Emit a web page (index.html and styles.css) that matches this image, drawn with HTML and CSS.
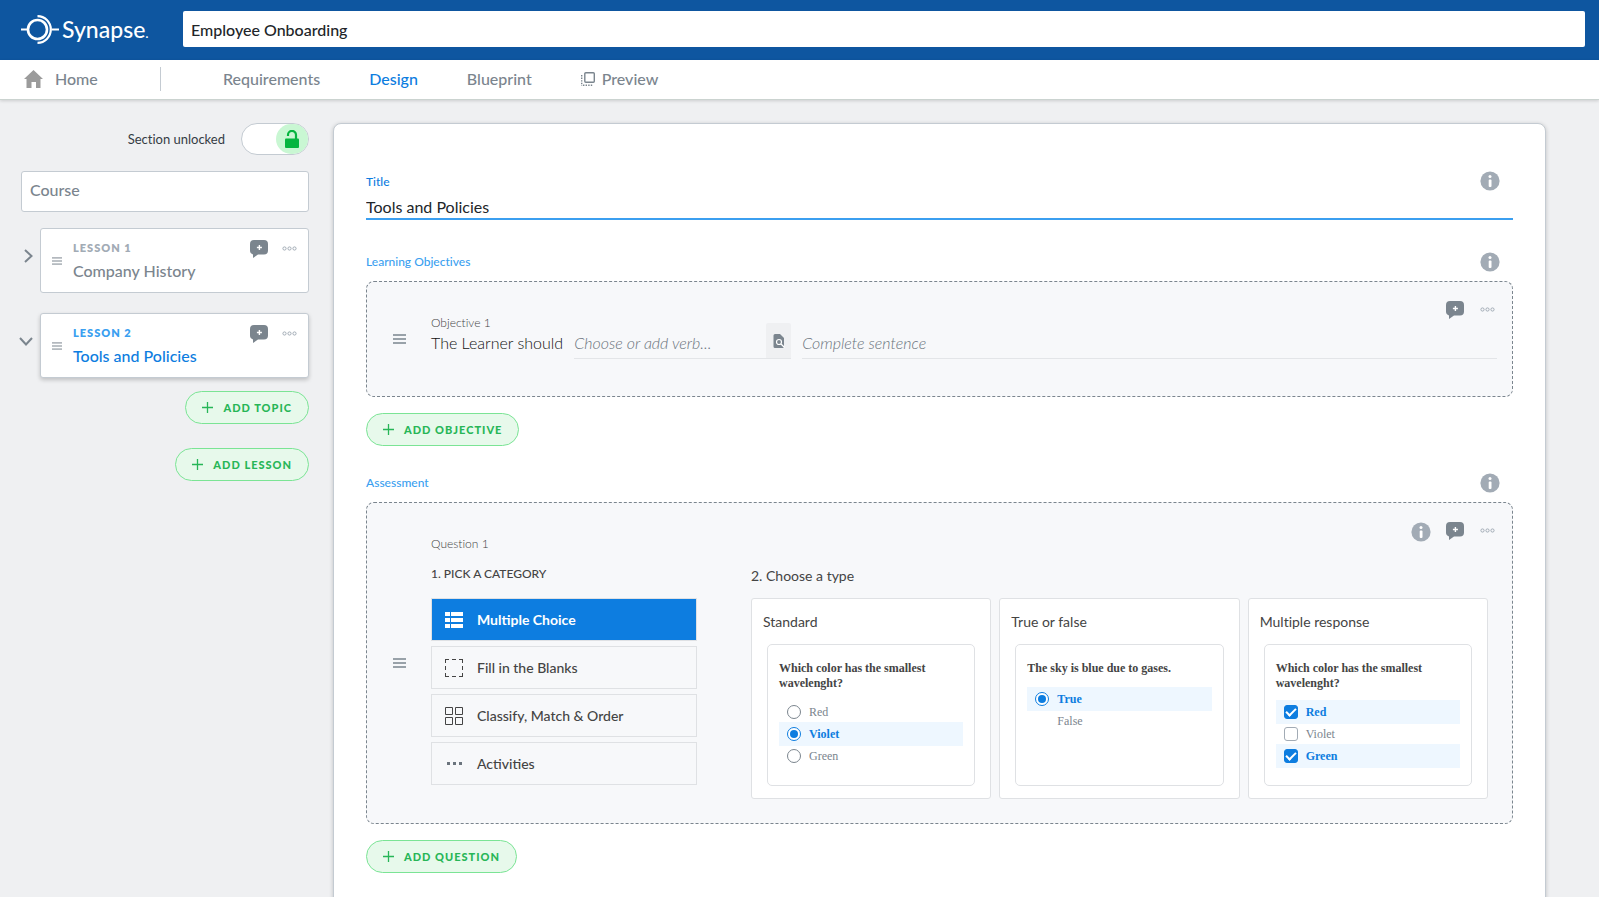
FILE: index.html
```
<!DOCTYPE html>
<html lang="en">
<head>
    <meta charset="UTF-8">
    <meta name="viewport" content="width=device-width, initial-scale=1.0">
    <title>Synapse - Employee Onboarding</title>
    <link rel="stylesheet" href="styles.css">
</head>
<body>
    <!-- Shared icons -->
    <svg class="sprite" aria-hidden="true">
        <symbol id="icon-info" viewBox="0 0 20 20">
            <circle cx="10" cy="10" r="9.6" fill="#a2abb5"/>
            <circle cx="10" cy="5.4" r="1.5" fill="#fff"/>
            <rect x="8.7" y="8.4" width="2.8" height="7.6" rx="1" fill="#fff"/>
        </symbol>
        <symbol id="icon-comment" viewBox="0 0 18 18">
            <path d="M4 0h10a4 4 0 0 1 4 4v6.5a4 4 0 0 1-4 4H8L3 18v-3.6A4 4 0 0 1 0 10.500V4a4 4 0 0 1 4-4z" fill="#7b858e"/>
            <path d="M9.400 5v5M6.900 7.500h5" stroke="#fff" stroke-width="1.400"/>
        </symbol>
        <symbol id="icon-more" viewBox="0 0 15 5">
            <g fill="none" stroke="#a2abb5">
                <circle cx="2.500" cy="2.500" r="1.600"/>
                <circle cx="7.500" cy="2.500" r="1.600"/>
                <circle cx="12.500" cy="2.500" r="1.600"/>
            </g>
        </symbol>
        <symbol id="icon-plus" viewBox="0 0 11 11">
            <path d="M5.500 0v11M0 5.500h11" stroke="#27b657" stroke-width="1.300"/>
        </symbol>
        <symbol id="icon-drag" viewBox="0 0 13 10">
            <path d="M0 1h13M0 5h13M0 9h13" stroke="#7b858e" stroke-width="1.300"/>
        </symbol>
    </svg>

    <header class="header">
        <a class="logo" href="#" aria-label="Synapse">
            <svg class="logo-mark" viewBox="0 0 38 30">
                <g fill="none" stroke="#fff">
                    <circle cx="16.500" cy="15.500" r="9.500" stroke-width="2.600"/>
                    <path d="M0 15.500h7M30.500 15.500H38" stroke-width="2.200"/>
                    <path d="M16.500 2.200a13.300 13.300 0 0 1 0 26.600" stroke-width="2.200"/>
                </g>
            </svg>
            <span class="logo-text">Synapse<small>.</small></span>
        </a>
        <input class="project-name" type="text" value="Employee Onboarding" aria-label="Project name">
    </header>

    <nav class="nav">
        <a class="nav-home" href="#">
            <svg width="19" height="18" viewBox="0 0 19 18"><path d="M9.500 0L19 9h-2.500v9h-4.500v-6H7.500v6H2.500V9H0z" fill="#9b9b9b"/></svg>
            Home
        </a>
        <div class="nav-links">
            <a href="#">Requirements</a>
            <a class="active" href="#">Design</a>
            <a href="#">Blueprint</a>
            <a class="nav-preview" href="#">
                <svg width="14" height="14" viewBox="0 0 14 14" fill="none" stroke="#7b858e">
                    <rect x="3.800" y=".7" width="9.500" height="9.500" rx="1" stroke-width="1.400"/>
                    <path d="M.7 3v11M2 13.300h10" stroke-width="1.400" stroke-dasharray="1.400 1.200"/>
                </svg>
                Preview
            </a>
        </div>
    </nav>

    <div class="layout">
        <aside class="sidebar">
            <label class="lock">
                Section unlocked
                <input type="checkbox" checked>
                <span class="lock-track">
                    <span class="lock-knob">
                        <svg width="14" height="18" viewBox="0 0 14 18">
                            <path d="M3 6V5a4 4 0 0 1 8-.2V9" fill="none" stroke="#05b53f" stroke-width="2.200"/>
                            <rect y="8.500" width="14" height="9.500" rx="1" fill="#05b53f"/>
                        </svg>
                    </span>
                </span>
            </label>

            <a class="course" href="#">Course</a>

            <div class="lesson-row">
                <button class="toggle" type="button" aria-label="Expand lesson 1">
                    <svg width="9" height="14" viewBox="0 0 9 14"><path d="M1 1l6.500 6L1 13" fill="none" stroke="#7b858e" stroke-width="2"/></svg>
                </button>
                <div class="lesson">
                    <svg class="lesson-drag"><use href="#icon-drag"/></svg>
                    <div class="lesson-text">
                        <span class="lesson-number">LESSON 1</span>
                        <a class="lesson-title" href="#">Company History</a>
                    </div>
                    <div class="actions">
                        <button type="button" aria-label="Add comment"><svg class="comment"><use href="#icon-comment"/></svg></button>
                        <button type="button" aria-label="More"><svg class="more"><use href="#icon-more"/></svg></button>
                    </div>
                </div>
            </div>

            <div class="lesson-row">
                <button class="toggle" type="button" aria-label="Collapse lesson 2">
                    <svg width="14" height="9" viewBox="0 0 14 9"><path d="M1 1l6 6.500L13 1" fill="none" stroke="#7b858e" stroke-width="2"/></svg>
                </button>
                <div class="lesson selected">
                    <svg class="lesson-drag"><use href="#icon-drag"/></svg>
                    <div class="lesson-text">
                        <span class="lesson-number">LESSON 2</span>
                        <a class="lesson-title" href="#">Tools and Policies</a>
                    </div>
                    <div class="actions">
                        <button type="button" aria-label="Add comment"><svg class="comment"><use href="#icon-comment"/></svg></button>
                        <button type="button" aria-label="More"><svg class="more"><use href="#icon-more"/></svg></button>
                    </div>
                </div>
            </div>

            <div class="sidebar-buttons">
                <button class="add" type="button"><svg><use href="#icon-plus"/></svg>ADD TOPIC</button>
                <button class="add" type="button"><svg><use href="#icon-plus"/></svg>ADD LESSON</button>
            </div>
        </aside>

        <main class="panel">
            <section class="field">
                <div class="section-head">
                    <label class="strong" for="title">Title</label>
                    <button type="button" aria-label="About the title"><svg class="info"><use href="#icon-info"/></svg></button>
                </div>
                <input class="title-input" type="text" id="title" value="Tools and Policies">
            </section>

            <section class="group">
                <div class="section-head">
                    <h2>Learning Objectives</h2>
                    <button type="button" aria-label="About learning objectives"><svg class="info"><use href="#icon-info"/></svg></button>
                </div>
                <div class="box">
                    <svg class="drag"><use href="#icon-drag"/></svg>
                    <div class="box-body">
                        <p class="item-name">Objective 1</p>
                        <div class="objective-line">
                            <label for="verb">The Learner should</label>
                            <div class="verb">
                                <input type="text" id="verb" placeholder="Choose or add verb...">
                                <button type="button" aria-label="Find a verb">
                                    <svg width="12" height="14" viewBox="0 0 12 14">
                                        <path d="M2 0h5l4 4v9a1 1 0 0 1-1 1H2a1.500 1.500 0 0 1-1.500-1.500v-11A1.500 1.500 0 0 1 2 0z" fill="#7b858e"/>
                                        <circle cx="6" cy="8" r="2.500" fill="none" stroke="#fff" stroke-width="1.200"/>
                                        <path d="M8 10l3.500 3.500" stroke="#fff" stroke-width="1.200"/>
                                    </svg>
                                </button>
                            </div>
                            <input class="sentence" type="text" placeholder="Complete sentence" aria-label="Complete sentence">
                        </div>
                    </div>
                    <div class="actions box-actions">
                        <button type="button" aria-label="Add comment"><svg class="comment"><use href="#icon-comment"/></svg></button>
                        <button type="button" aria-label="More"><svg class="more"><use href="#icon-more"/></svg></button>
                    </div>
                </div>
                <button class="add" type="button"><svg><use href="#icon-plus"/></svg>ADD OBJECTIVE</button>
            </section>

            <section class="group">
                <div class="section-head">
                    <h2>Assessment</h2>
                    <button type="button" aria-label="About assessment"><svg class="info"><use href="#icon-info"/></svg></button>
                </div>
                <div class="box">
                    <svg class="drag"><use href="#icon-drag"/></svg>
                    <div class="box-body question-body">
                        <p class="item-name">Question 1</p>
                        <div class="question">
                            <div class="categories">
                                <h3 class="small-heading">1. PICK A CATEGORY</h3>
                                <button class="category chosen" type="button">
                                    <svg viewBox="0 0 18 18" fill="#fff">
                                        <path d="M0 1h5v4H0zM6 1h12v4H6zM0 7h5v4H0zM6 7h12v4H6zM0 13h5v4H0zM6 13h12v4H6z"/>
                                    </svg>
                                    Multiple Choice
                                </button>
                                <button class="category" type="button">
                                    <svg viewBox="0 0 18 18" fill="none" stroke="#444">
                                        <path d="M0 .5h18M0 17.500h18M.5 0v18M17.500 0v18" stroke-dasharray="4 3"/>
                                    </svg>
                                    Fill in the Blanks
                                </button>
                                <button class="category" type="button">
                                    <svg viewBox="0 0 18 18" fill="none" stroke="#444">
                                        <path d="M.5.5h7v7h-7zM10.500.5h7v7h-7zM.5 10.500h7v7h-7zM10.500 10.500h7v7h-7z"/>
                                    </svg>
                                    Classify, Match &amp; Order
                                </button>
                                <button class="category" type="button">
                                    <svg viewBox="0 0 18 18" fill="#6b747d">
                                        <path d="M2 7h3v3H2zM8 7h3v3H8zM14 7h3v3h-3z"/>
                                    </svg>
                                    Activities
                                </button>
                            </div>

                            <div class="types">
                                <h3>2. Choose a type</h3>
                                <div class="type-list">
                                    <article class="type">
                                        <h4>Standard</h4>
                                        <div class="sample">
                                            <p>Which color has the smallest wavelenght?</p>
                                            <div class="options radios">
                                                <label><input type="radio" name="standard">Red</label>
                                                <label class="picked"><input type="radio" name="standard" checked>Violet</label>
                                                <label><input type="radio" name="standard">Green</label>
                                            </div>
                                        </div>
                                    </article>
                                    <article class="type">
                                        <h4>True or false</h4>
                                        <div class="sample">
                                            <p>The sky is blue due to gases.</p>
                                            <div class="options radios">
                                                <label class="picked"><input type="radio" name="truefalse" checked>True</label>
                                                <label><input class="blank" type="radio" name="truefalse">False</label>
                                            </div>
                                        </div>
                                    </article>
                                    <article class="type">
                                        <h4>Multiple response</h4>
                                        <div class="sample">
                                            <p>Which color has the smallest wavelenght?</p>
                                            <div class="options">
                                                <label class="picked"><input type="checkbox" checked>Red</label>
                                                <label><input type="checkbox">Violet</label>
                                                <label class="picked"><input type="checkbox" checked>Green</label>
                                            </div>
                                        </div>
                                    </article>
                                </div>
                            </div>
                        </div>
                    </div>
                    <div class="actions box-actions">
                        <button type="button" aria-label="About questions"><svg class="info"><use href="#icon-info"/></svg></button>
                        <button type="button" aria-label="Add comment"><svg class="comment"><use href="#icon-comment"/></svg></button>
                        <button type="button" aria-label="More"><svg class="more"><use href="#icon-more"/></svg></button>
                    </div>
                </div>
                <button class="add" type="button"><svg><use href="#icon-plus"/></svg>ADD QUESTION</button>
            </section>
        </main>
    </div>
</body>
</html>
```
FILE: styles.css
```
* {
    box-sizing: border-box;
}

body {
    margin: 0;
    background-color: #eff0f2;
    color: #444;
    font-family: Lato, sans-serif;
    font-size: 14px;
    font-variant-ligatures: none;
}

h2, h3, h4, p {
    margin: 0;
    font-weight: 500;
}

a {
    color: inherit;
    text-decoration: none;
}

button, input {
    font-family: inherit;
    margin: 0;
}

button {
    padding: 0;
    border: none;
    background: none;
    cursor: pointer;
}

svg {
    display: block;
    flex-shrink: 0;
}

.sprite {
    display: none;
}

/* Header */
.header {
    display: flex;
    align-items: center;
    height: 60px;
    padding: 0 14px 2px 21px;
    background-color: #0e56a0;
}

.logo {
    display: flex;
    align-items: center;
    gap: 3px;
    width: 162px;
    color: #fff;
}

.logo-mark {
    width: 38px;
    height: 30px;
}

.logo-text {
    padding-top: 3px;
    font-size: 23px;
    font-weight: 500;
    line-height: 30px;
}

.logo-text small {
    font-size: 14px;
}

.project-name {
    flex: 1;
    height: 36px;
    padding: 0 8px;
    border: none;
    border-radius: 2px;
    background-color: #fff;
    color: #212529;
    font-size: 16px;
    font-weight: 500;
}

.nav {
    display: flex;
    align-items: center;
    height: 40px;
    padding: 0 0 2px 24px;
    border-bottom: 1px solid #cbd3d0;
    background-color: #fff;
    box-shadow: 0 1px 3px rgba(0, 0, 0, 0.15);
    color: #7b858e;
    font-size: 16px;
    font-weight: 500;
}

.nav-home {
    display: flex;
    align-items: center;
    gap: 12px;
    width: 137px;
    height: 24px;
    border-right: 1px solid #c4cbd2;
}

.nav-links {
    display: flex;
    gap: 49px;
    padding-left: 62px;
}

.nav-links .active {
    color: #0d7de0;
}

.nav-preview {
    display: flex;
    align-items: center;
    gap: 7px;
}

/* Layout */
.layout {
    display: flex;
    align-items: flex-start;
    gap: 24px;
    padding: 23px 53px 0 19px;
}

.sidebar {
    width: 290px;
    flex-shrink: 0;
}

.lock {
    display: flex;
    align-items: center;
    justify-content: flex-end;
    gap: 16px;
    color: #353c44;
    font-size: 13px;
    font-weight: 400;
    position: relative;
}

.lock input {
    position: absolute;
    opacity: 0;
}

.lock-track {
    display: flex;
    justify-content: flex-end;
    width: 68px;
    height: 32px;
    border: 1px solid #c4cbd2;
    border-radius: 16px;
    background-color: #fff;
}

.lock-knob {
    display: flex;
    align-items: center;
    justify-content: center;
    width: 32px;
    height: 30px;
    border-radius: 15px;
    background-color: #c9f7d3;
}

.course {
    display: block;
    height: 41px;
    margin: 16px 0 16px 2px;
    padding: 0 8px;
    border: 1px solid #c4cbd2;
    border-radius: 3px;
    background-color: #fff;
    color: #7b858e;
    font-size: 16px;
    font-weight: 500;
    line-height: 36px;
}

.lesson-row {
    display: flex;
    margin-bottom: 20px;
}

.toggle {
    display: flex;
    align-items: center;
    justify-content: flex-end;
    width: 14px;
    height: 56px;
    margin-right: 7px;
}

.lesson {
    flex: 1;
    display: flex;
    height: 65px;
    padding: 10px 11px 0 11px;
    border: 1px solid #c4cbd2;
    border-radius: 3px;
    background-color: #fff;
    color: #7b858e;
}

.lesson.selected {
    box-shadow: 0 2px 4px rgba(0, 0, 0, 0.2);
    color: #0d7de0;
}

.lesson-drag {
    width: 10px;
    height: 8px;
    margin-top: 18px;
}

.lesson-text {
    flex: 1;
    display: flex;
    flex-direction: column;
    padding-left: 11px;
}

.lesson-number {
    color: #a2abb5;
    font-size: 11px;
    font-weight: 800;
    letter-spacing: 1px;
    line-height: 18px;
}

.selected .lesson-number {
    color: #3b9ff0;
}

.lesson-title {
    font-size: 16px;
    font-weight: 500;
    line-height: 28px;
}

.actions {
    display: flex;
    align-items: flex-start;
}

.lesson .actions {
    padding-top: 1px;
}

.comment {
    width: 18px;
    height: 18px;
}

.more {
    width: 15px;
    height: 5px;
    margin: 6px 0 0 14px;
}

.info {
    width: 20px;
    height: 20px;
}

.sidebar-buttons {
    display: flex;
    flex-direction: column;
    align-items: flex-end;
    gap: 24px;
    margin-top: -7px;
}

.add {
    display: inline-flex;
    align-items: center;
    gap: 10px;
    height: 33px;
    padding: 0 16px;
    border: 1px solid #7be495;
    border-radius: 17px;
    background-color: #e7f9eb;
    color: #27b657;
    font-size: 11px;
    font-weight: 900;
    letter-spacing: 1px;
}

.add svg {
    width: 11px;
    height: 11px;
}

/* Main panel */
.panel {
    flex: 1;
    min-width: 0;
    padding: 47px 32px 48px;
    border: 1px solid #c4cbd2;
    border-radius: 8px;
    background-color: #fff;
    box-shadow: 0 1px 4px rgba(0, 0, 0, 0.2);
}

.field {
    margin-bottom: 32px;
}

.group {
    margin-bottom: 27px;
}

.section-head {
    display: flex;
    align-items: center;
    justify-content: space-between;
    height: 20px;
    padding-right: 13px;
}

.section-head h2,
.section-head label {
    color: #3b9ff0;
    font-size: 12px;
    font-weight: 500;
}

.section-head h2 {
    padding-bottom: 2px;
}

.section-head .strong {
    color: #0d7de0;
}

.title-input {
    display: block;
    width: 100%;
    height: 29px;
    padding: 3px 0 0;
    border: none;
    border-bottom: 2px solid #3b9ff0;
    color: #212529;
    font-size: 16px;
    font-weight: 400;
}

.box {
    display: flex;
    align-items: center;
    margin: 9px 0 16px;
    padding: 0 15px 0 26px;
    border: 1px dashed #7b858e;
    border-radius: 8px;
    background-color: #f7f8fa;
    position: relative;
}

.drag {
    width: 13px;
    height: 10px;
}

.box-body {
    flex: 1;
    min-width: 0;
    margin-left: 25px;
    padding: 32px 0 37px;
}

.question-body {
    padding-bottom: 24px;
}

.box-actions {
    position: absolute;
    top: 19px;
    right: 17px;
}

.box-actions .info {
    margin-right: 15px;
}

.box-actions .more {
    margin-left: 16px;
}

.item-name {
    color: #444;
    font-size: 12px;
    font-weight: 300;
    line-height: 18px;
}

.objective-line {
    display: flex;
    align-items: flex-end;
    gap: 11px;
    height: 27px;
    color: #111;
    font-size: 16px;
    font-weight: 300;
}

.objective-line label {
    line-height: 32px;
}

.objective-line input {
    min-width: 0;
    padding: 0;
    border: none;
    background: none;
    font-size: 16px;
}

.objective-line input::placeholder {
    color: #6b747d;
    font-style: italic;
    font-weight: 300;
    opacity: 1;
}

.verb {
    display: flex;
    width: 217px;
    height: 36px;
    border-bottom: 1px solid #e3e5e8;
}

.verb input {
    flex: 1;
    padding-top: 4px;
}

.verb button {
    display: flex;
    align-items: center;
    justify-content: center;
    width: 25px;
    border-radius: 2px 2px 0 0;
    background-color: #eff0f2;
}

.objective-line .sentence {
    flex: 1;
    height: 36px;
    padding-top: 4px;
    border-bottom: 1px solid #e3e5e8;
}

/* Question editor */
.question {
    display: flex;
    gap: 54px;
    padding-right: 9px;
}

.categories {
    display: flex;
    flex-direction: column;
    gap: 5px;
    width: 266px;
    flex-shrink: 0;
}

.small-heading {
    padding-top: 12px;
    height: 40px;
    font-size: 12px;
    line-height: 18px;
}

.category {
    display: flex;
    align-items: center;
    gap: 14px;
    height: 43px;
    padding: 0 13px;
    border: 1px solid #dfe1e4;
    color: #444;
    font-size: 14px;
    font-weight: 500;
}

.category svg {
    width: 18px;
    height: 18px;
}

.category.chosen {
    background-color: #0d7de0;
    color: #fff;
    font-weight: 700;
}

.types {
    flex: 1;
    min-width: 0;
}

.types h3 {
    height: 45px;
    padding-top: 14px;
    font-size: 14px;
    font-weight: 400;
    line-height: 18px;
}

.type-list {
    display: grid;
    grid-template-columns: repeat(3, 1fr);
    gap: 8px;
}

.type {
    padding: 14px 15px 12px;
    border: 1px solid #dfe1e4;
    border-radius: 3px;
    background-color: #fff;
}

.type h4 {
    margin: 0 -4px 13px;
    font-size: 14px;
    font-weight: 400;
    line-height: 18px;
}

.sample {
    height: 142px;
    padding: 16px 11px;
    border: 1px solid #dfe1e4;
    border-radius: 5px;
    font-family: "Liberation Serif", serif;
    font-size: 12px;
}

.sample p {
    font-weight: 700;
    line-height: 15px;
}

.options {
    display: flex;
    flex-direction: column;
    margin-top: 9px;
    color: #7b858e;
}

.options.radios {
    margin-top: 11px;
}

.options label {
    display: flex;
    align-items: center;
    gap: 8px;
    height: 20px;
    padding-left: 8px;
}

.options .picked {
    height: 24px;
    background-color: #eef7ff;
    color: #0d7de0;
    font-weight: 700;
}

.options input {
    appearance: none;
    display: flex;
    align-items: center;
    justify-content: center;
    width: 14px;
    height: 14px;
    border: 1px solid #a2abb5;
    border-radius: 3px;
    background-color: #fff;
}

.options input:checked {
    border-color: #0d7de0;
    background-color: #0d7de0;
}

.options input[type="checkbox"]:checked::before {
    content: "";
    width: 8px;
    height: 4px;
    margin-bottom: 2px;
    border: solid #fff;
    border-width: 0 0 2px 2px;
    transform: rotate(-45deg);
}

.options input[type="radio"] {
    border-color: #7b858e;
    border-radius: 50%;
}

.options input[type="radio"]:checked {
    border-color: #0d7de0;
    background-color: #fff;
}

.options input[type="radio"]:checked::before {
    content: "";
    width: 8px;
    height: 8px;
    border-radius: 50%;
    background-color: #0d7de0;
}

.options .blank {
    visibility: hidden;
}
```
